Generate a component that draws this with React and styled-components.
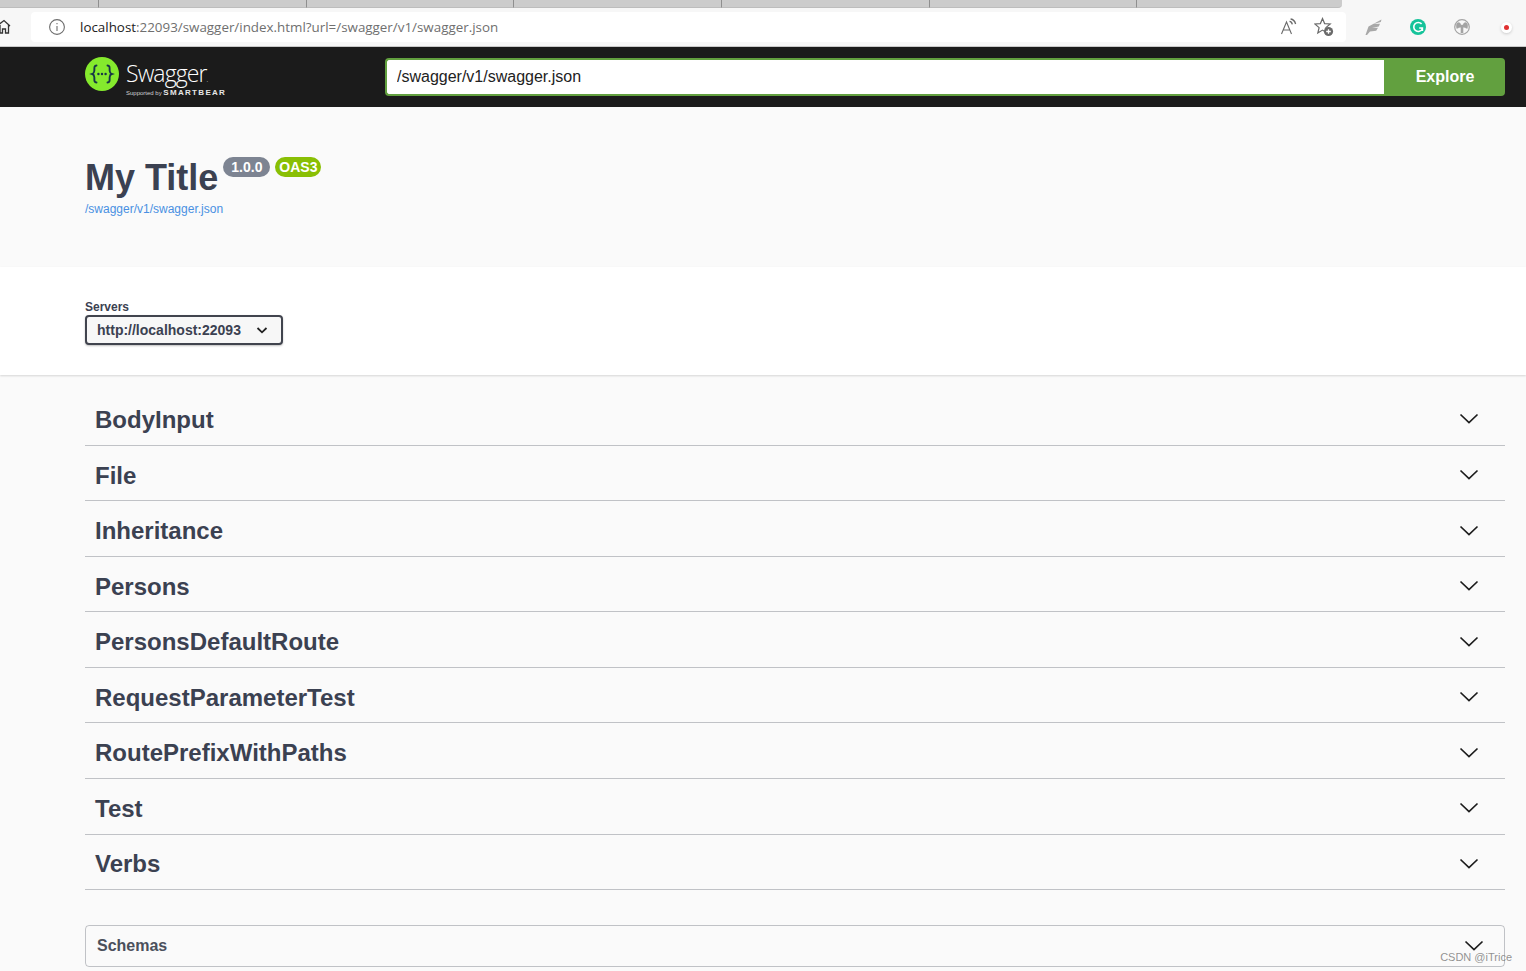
import React from 'react';
import styled, { createGlobalStyle } from 'styled-components';

const tagNames = ['BodyInput', 'File', 'Inheritance', 'Persons', 'PersonsDefaultRoute', 'RequestParameterTest', 'RoutePrefixWithPaths', 'Test', 'Verbs'];

const Chevron = ({ size = 20 }) => (
  <svg width={size} height={size} viewBox="0 0 20 20" fill="none" stroke="#1c1c1c" strokeWidth="1.7">
    <path d="M1.5 5.5 L10 13.5 L18.5 5.5" />
  </svg>
);

const SwaggerLogo = () => (
  <svg width="34" height="34" viewBox="0 0 34 34">
    <circle cx="17" cy="17" r="17" fill="#85ea2d" />
    <g fill="none" stroke="#173647" strokeWidth="1.9" strokeLinecap="round">
      <path d="M11.5 8.5 C8.6 8.5 9.6 11.5 9.3 14 C9.1 15.8 8.6 16.6 7.3 17 C8.6 17.4 9.1 18.2 9.3 20 C9.6 22.5 8.6 25.5 11.5 25.5" />
      <path d="M22.5 8.5 C25.4 8.5 24.4 11.5 24.7 14 C24.9 15.8 25.4 16.6 26.7 17 C25.4 17.4 24.9 18.2 24.7 20 C24.4 22.5 25.4 25.5 22.5 25.5" />
    </g>
    <g fill="#173647">
      <circle cx="13.4" cy="17" r="1.2" />
      <circle cx="17" cy="17" r="1.2" />
      <circle cx="20.6" cy="17" r="1.2" />
    </g>
  </svg>
);

const App = () => (
  <>
    <GlobalStyle />
    <TabStrip>
      <TabSlot />
      <TabSlot $wide />
      <TabSlot $wide />
      <TabSlot $wide />
      <TabSlot $wide />
      <TabSlot $wide />
      <TabSlot $last />
    </TabStrip>

    <BrowserBar>
      <HomeButton>
        <svg width="14" height="16" viewBox="0 0 14 16" fill="none" stroke="#333" strokeWidth="1.3">
          <path d="M-3 7 L4 1.5 L10 7 M0 6 V14 H2.5 V10 H5.5 V14 H8.5 V6" />
        </svg>
      </HomeButton>
      <AddressField>
        <svg width="18" height="18" viewBox="0 0 18 18" fill="none" stroke="#6d6d6d" strokeWidth="1.1">
          <circle cx="9" cy="9" r="7.4" />
          <path d="M9 8 V13 M9 5 V6.3" />
        </svg>
        <AddressText>
          <strong>localhost</strong>:22093/swagger/index.html?url=/swagger/v1/swagger.json
        </AddressText>
        <AddressActions>
          <svg width="18" height="18" viewBox="0 0 18 18" fill="none" stroke="#6a6a6a" strokeWidth="1.1">
            <path d="M1.5 16 L6.5 4 L11.5 16 M3.2 12 H9.8" />
            <path d="M9.5 3.4 C11 3.6 12 4.8 12.3 6.4 M10.6 1 C13.2 1.4 15 3.4 15.6 6" strokeWidth="1.3" />
          </svg>
          <svg width="20" height="20" viewBox="0 0 20 20">
            <path d="M8.5 1.5 L10.6 6.6 L16.2 7 L11.9 10.6 L13.2 16 L8.5 13.1 L3.8 16 L5.1 10.6 L0.8 7 L6.4 6.6 Z" fill="none" stroke="#6a6a6a" strokeWidth="1.2" />
            <circle cx="14.5" cy="14.5" r="4.6" fill="#6a6a6a" />
            <path d="M14.5 12.2 V16.8 M12.2 14.5 H16.8" stroke="#fff" strokeWidth="1.3" />
          </svg>
        </AddressActions>
      </AddressField>
      <Extensions>
        <svg width="18" height="18" viewBox="0 0 18 18">
          <path d="M0.5 17 L3.5 8.5 L16.5 1.5 L15.8 4 L8.5 6 L15 5.8 L13.8 8.4 L7 10 L13 9.8 L11.2 12.8 L5 13.6 L2 17 Z" fill="#a8a8a8" />
        </svg>
        <svg width="16" height="16" viewBox="0 0 16 16">
          <circle cx="8" cy="8" r="8" fill="#15c39a" />
          <path d="M11.6 4.9 A4.5 4.5 0 1 0 12.3 10 M12.4 12 V9 H9.2" fill="none" stroke="#fff" strokeWidth="1.6" />
        </svg>
        <svg width="16" height="16" viewBox="0 0 16 16" fill="none" stroke="#a3a3a3">
          <circle cx="8" cy="8" r="7.3" strokeWidth="1.2" />
          <path d="M8 6 V14" strokeWidth="2.6" />
          <path d="M8 8 C6.5 2.6 3.6 2.8 2.6 5 C2 6.5 2.2 8 2.8 9.6 C4.4 8.4 6.4 8.4 8 8 C9.6 8.4 11.6 8.4 13.2 9.6 C13.8 8 14 6.5 13.4 5 C12.4 2.8 9.5 2.6 8 8 Z" fill="#a3a3a3" strokeWidth="0.4" />
        </svg>
        <RecordDot />
      </Extensions>
    </BrowserBar>

    <Topbar>
      <LogoLink>
        <SwaggerLogo />
        <LogoWords>
          <LogoName>Swagger<small>.</small></LogoName>
          <LogoSupport>Supported by <b>SMARTBEAR</b></LogoSupport>
        </LogoWords>
      </LogoLink>
      <ExploreForm>
        <UrlInput readOnly value="/swagger/v1/swagger.json" />
        <ExploreButton>Explore</ExploreButton>
      </ExploreForm>
    </Topbar>

    <InfoSection>
      <TitleRow>
        <Title>My Title</Title>
        <Badge $bg="#7d8492" $width={47}>1.0.0</Badge>
        <Badge $bg="#89bf04" $width={46}>OAS3</Badge>
      </TitleRow>
      <SpecLink>/swagger/v1/swagger.json</SpecLink>
    </InfoSection>

    <ServersSection>
      <ServersLabel>Servers</ServersLabel>
      <ServerSelect>
        http://localhost:22093
        <svg width="14" height="14" viewBox="0 0 14 14" fill="none" stroke="#222" strokeWidth="1.8">
          <path d="M2.5 5 L7 9.3 L11.5 5" />
        </svg>
      </ServerSelect>
    </ServersSection>

    <TagList>
      {tagNames.map((name) => (
        <TagRow key={name}>
          <TagName>{name}</TagName>
          <Chevron />
        </TagRow>
      ))}
    </TagList>

    <SchemasBox>
      <SchemasTitle>Schemas</SchemasTitle>
      <SchemasArrow><Chevron /></SchemasArrow>
    </SchemasBox>

    <Watermark>CSDN @iTrice</Watermark>
  </>
);

export default App;

const GlobalStyle = createGlobalStyle`
  html, body {
    margin: 0;
    height: 971px;
    overflow: hidden;
    background: #fafafa;
    font-family: 'Liberation Sans', Arial, sans-serif;
    color: #3b4151;
  }
`;

const TabStrip = styled.div`
  display: flex;
  height: 8px;
  background: #f7f7f7;
`;

const TabSlot = styled.div`
  width: ${(props) => (props.$wide ? '207.7px' : props.$last ? '205px' : '99px')};
  background: #cccccc;
  border-bottom: 1px solid #bdbdbd;
  border-right: ${(props) => (props.$last ? 'none' : '1px solid #8f8f8f')};
  border-bottom-right-radius: ${(props) => (props.$last ? '4px' : '0')};
  box-sizing: border-box;
`;

const BrowserBar = styled.div`
  display: flex;
  align-items: center;
  height: 39px;
  background: #f7f7f7;
  border-bottom: 1px solid #c9c9c9;
  box-sizing: border-box;
`;

const HomeButton = styled.div`
  display: flex;
  flex: 0 0 31px;
  align-items: center;
`;

const AddressField = styled.div`
  display: flex;
  flex: 0 0 1315px;
  align-items: center;
  height: 30px;
  padding: 0 12px 0 17px;
  box-sizing: border-box;
  background: #fff;
  border-radius: 4px;
`;

const AddressText = styled.div`
  margin-left: 14px;
  flex: 1;
  font-family: 'Open Sans', sans-serif;
  font-size: 13.38px;
  color: #6f6f6f;
  white-space: nowrap;

  strong {
    font-weight: 400;
    color: #222;
  }
`;

const AddressActions = styled.div`
  display: flex;
  align-items: center;
  gap: 16px;
`;

const Extensions = styled.div`
  display: grid;
  flex: 0 0 auto;
  grid-template-columns: repeat(4, 44px);
  justify-items: center;
  align-items: center;
  margin-right: -6px;
  padding-left: 6px;
`;

const RecordDot = styled.div`
  width: 5px;
  height: 5px;
  border-radius: 50%;
  background: #e03131;
  box-shadow: 0 0 0 3px #fff, 0 1px 3px 3px rgba(0, 0, 0, 0.18);
`;

const Topbar = styled.header`
  display: flex;
  align-items: center;
  height: 60px;
  padding: 0 21px 0 85px;
  background: #1b1b1b;
`;

const LogoLink = styled.div`
  display: flex;
  align-items: flex-start;
  align-self: flex-start;
  gap: 7px;
  width: 300px;
  padding-top: 10px;
`;

const LogoWords = styled.div`
  display: flex;
  flex-direction: column;
  margin-top: 8px;
  color: #fff;
`;

const LogoName = styled.div`
  font-family: 'Open Sans', sans-serif;
  font-weight: 300;
  font-size: 23px;
  line-height: 17px;
  letter-spacing: -0.9px;

  small {
    font-size: 7px;
  }
`;

const LogoSupport = styled.div`
  font-size: 6px;
  line-height: 9px;
  color: #d0d0d0;
  white-space: nowrap;

  b {
    font-size: 8px;
    letter-spacing: 1.3px;
    color: #e6e6e6;
  }
`;

const ExploreForm = styled.div`
  display: flex;
  flex: 1;
  height: 38px;
`;

const UrlInput = styled.input`
  flex: 1;
  min-width: 0;
  height: 38px;
  box-sizing: border-box;
  padding: 0 10px;
  border: 2px solid #62a03f;
  border-right: none;
  border-radius: 4px 0 0 4px;
  outline: none;
  background: #fff;
  font-family: 'Liberation Sans', Arial, sans-serif;
  font-size: 16px;
  color: #222;
`;

const ExploreButton = styled.button`
  width: 121px;
  height: 38px;
  padding: 0 0 0 1px;
  border: none;
  border-radius: 0 4px 4px 0;
  background: #62a03f;
  color: #fff;
  font-family: 'Liberation Sans', Arial, sans-serif;
  font-size: 16px;
  font-weight: 700;
`;

const InfoSection = styled.section`
  height: 160px;
  padding: 49px 85px 0;
  box-sizing: border-box;
`;

const TitleRow = styled.div`
  display: flex;
  align-items: flex-start;
`;

const Title = styled.h1`
  margin: 0 5px 0 0;
  font-size: 36px;
  line-height: 44px;
  font-weight: 700;
  color: #3b4151;
`;

const Badge = styled.span`
  display: block;
  width: ${(props) => props.$width}px;
  height: 20px;
  margin: 1px 5px 0 0;
  border-radius: 57px;
  background: ${(props) => props.$bg};
  color: #fff;
  font-size: 14px;
  line-height: 20px;
  font-weight: 700;
  text-align: center;
`;

const SpecLink = styled.div`
  margin-top: 2px;
  font-size: 12px;
  line-height: 14px;
  color: #4990e2;
`;

const ServersSection = styled.section`
  height: 108px;
  padding: 33px 85px 0;
  box-sizing: border-box;
  background: #fff;
  box-shadow: 0 1px 2px 0 rgba(0, 0, 0, 0.15);
`;

const ServersLabel = styled.div`
  margin-bottom: 1px;
  font-size: 12px;
  line-height: 14px;
  font-weight: 700;
`;

const ServerSelect = styled.div`
  display: flex;
  align-items: center;
  justify-content: space-between;
  width: 198px;
  height: 30px;
  box-sizing: border-box;
  padding: 0 12px 0 10px;
  border: 2px solid #41444e;
  border-radius: 4px;
  background: #f7f7f7;
  box-shadow: 0 1px 2px 0 rgba(0, 0, 0, 0.25);
  font-size: 14px;
  font-weight: 700;
`;

const TagList = styled.div`
  margin-top: 15.2px;
  padding: 0 21px 0 85px;
`;

const TagRow = styled.div`
  display: flex;
  align-items: center;
  justify-content: space-between;
  height: 55.55px;
  box-sizing: border-box;
  padding: 4px 26px 0 10px;
  border-bottom: 1px solid rgba(59, 65, 81, 0.3);
`;

const TagName = styled.h3`
  margin: 1px 0 0;
  font-size: 24px;
  line-height: 30px;
  font-weight: 700;
  color: #3b4151;
`;

const SchemasBox = styled.section`
  display: flex;
  align-items: center;
  height: 42px;
  margin: 34.8px 21px 0 85px;
  padding: 0 11px;
  box-sizing: border-box;
  border: 1px solid rgba(59, 65, 81, 0.3);
  border-radius: 4px;
`;

const SchemasTitle = styled.h4`
  margin: 0;
  font-size: 16px;
  font-weight: 700;
  color: #4b505c;
`;

const SchemasArrow = styled.div`
  display: flex;
  margin-left: auto;
  margin-right: 9px;
`;

const Watermark = styled.div`
  position: absolute;
  right: 14px;
  top: 950px;
  font-size: 11px;
  line-height: 14px;
  color: rgba(110, 110, 110, 0.75);
`;
